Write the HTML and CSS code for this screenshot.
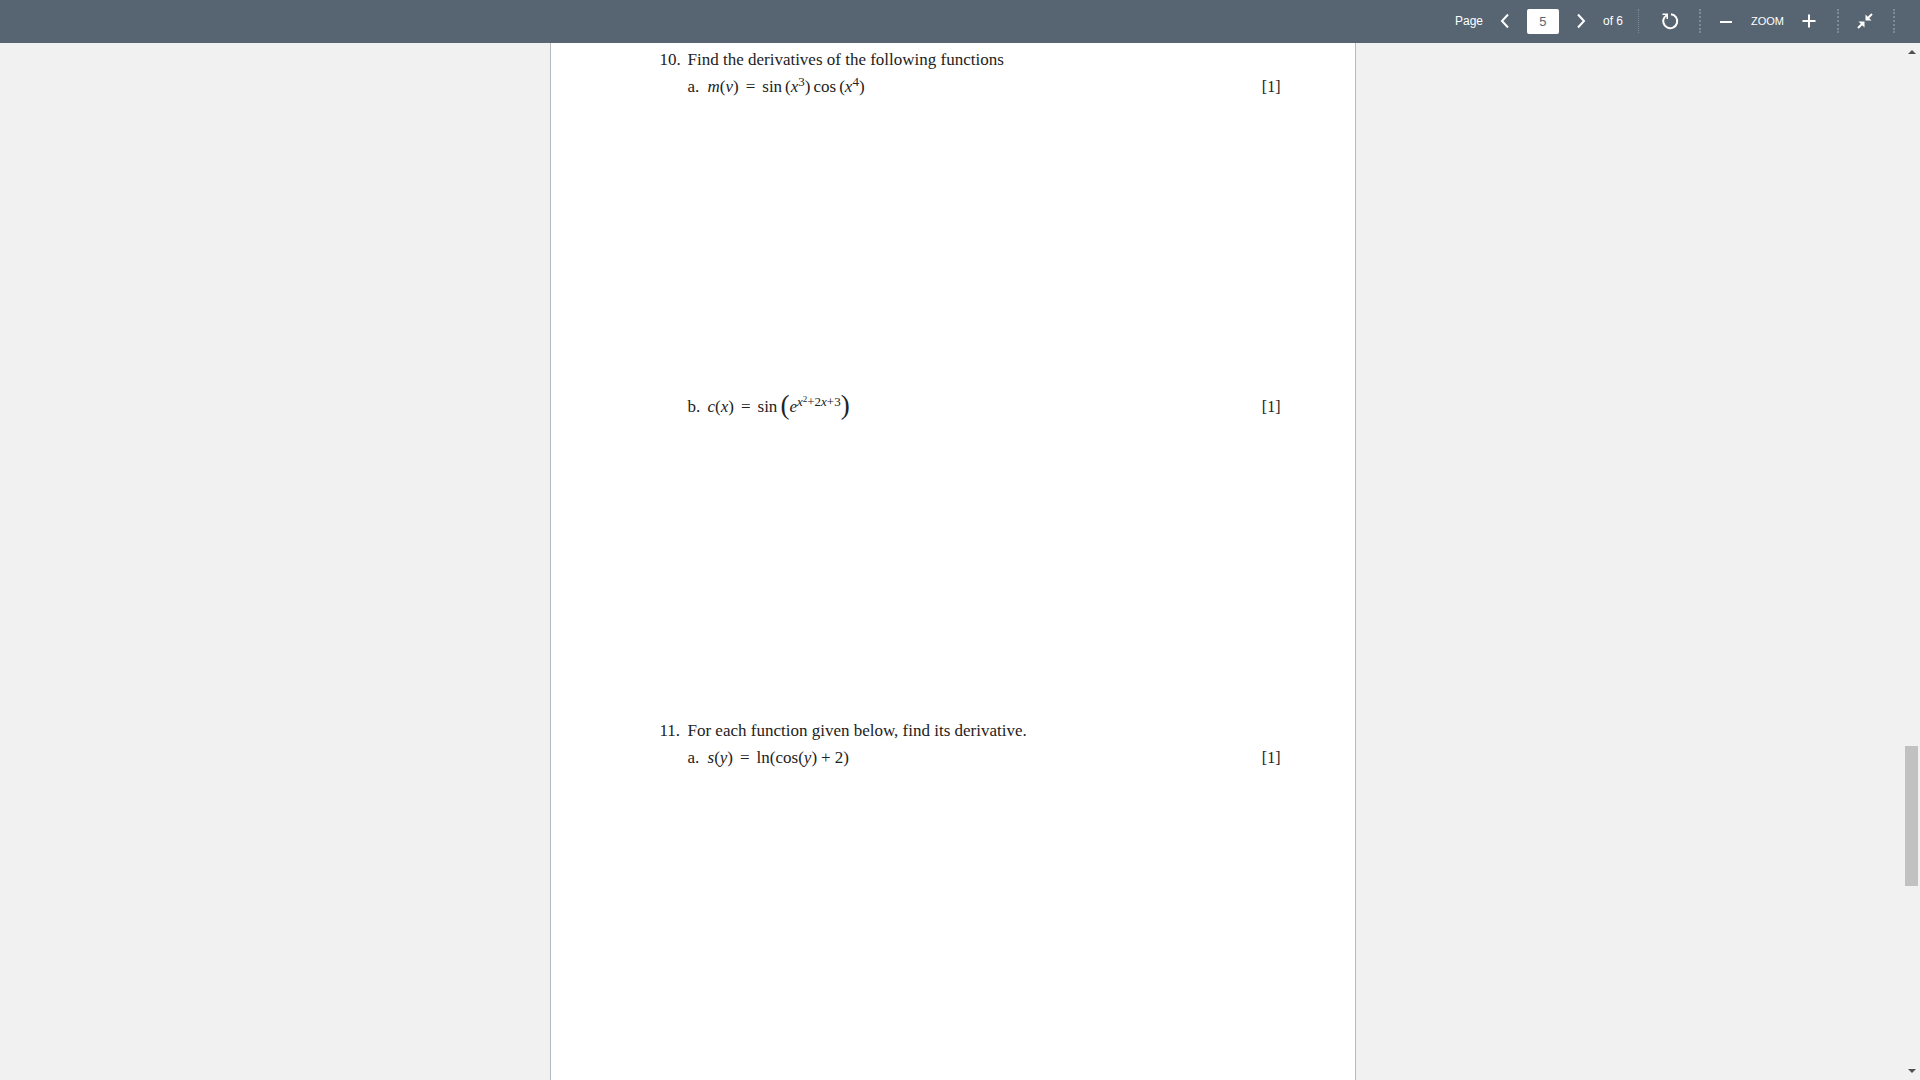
FILE: index.html
```html
<!DOCTYPE html>
<html lang="en">
<head>
<meta charset="utf-8">
<title>Document viewer</title>
<link rel="stylesheet" href="styles.css">
</head>
<body>
<header class="toolbar">
  <div class="group pager">
    <label for="page">Page</label>
    <button type="button" aria-label="Previous page"><svg width="10" height="16" viewBox="0 0 10 16"><path d="M8 1.500 2 8l6 6.500" /></svg></button>
    <input id="page" type="text" value="5">
    <button type="button" aria-label="Next page"><svg width="10" height="16" viewBox="0 0 10 16"><path d="M2 1.500 8 8l-6 6.500" /></svg></button>
    <span>of 6</span>
  </div>
  <div class="group rotate">
    <button type="button" aria-label="Rotate"><svg width="18" height="18" viewBox="0 0 18 18"><path d="M10 2.200A7 7 0 1 1 3.600 5" /><path class="fill" d="M1.500 1.500h5.500v5.500H5.500V4.500L3.800 6 2.800 5l1.700-2h-3z" /></svg></button>
  </div>
  <div class="group zoom">
    <button type="button" aria-label="Zoom out"><svg width="14" height="14" viewBox="0 0 14 14"><path d="M1 8h12" /></svg></button>
    <span>ZOOM</span>
    <button type="button" aria-label="Zoom in"><svg width="14" height="14" viewBox="0 0 14 14"><path d="M.5 7h13M7 .5v13" /></svg></button>
  </div>
  <div class="group shrink">
    <button type="button" aria-label="Exit full screen"><svg width="16" height="16" viewBox="0 0 16 16"><path d="M15 1l-4.500 4.500M1 15l4.500-4.500" /><path class="fill" d="M8.500 1.500v6h6l-2-2-2-2zM1.500 8.500h6v6l-2-2-2-2z" /></svg></button>
  </div>
</header>
<div class="viewer">
  <main class="sheet">
    <section class="question">
      <span>10.</span>
      <p>Find the derivatives of the following functions</p>
      <div class="part">
        <span>a.</span>
        <span class="formula"><i>m</i>(<i>v</i>)<span class="rel">=</span>sin<span class="open">(</span><i>x</i><sup>3</sup>)<span class="op">cos</span><span class="open">(</span><i>x</i><sup>4</sup>)</span>
        <span class="marks">[1]</span>
      </div>
      <div class="part">
        <span>b.</span>
        <span class="formula"><i>c</i>(<i>x</i>)<span class="rel">=</span>sin<span class="open big">(</span><i>e</i><sup><i>x</i><sup>2</sup>+2<i>x</i>+3</sup><span class="big">)</span></span>
        <span class="marks">[1]</span>
      </div>
    </section>
    <section class="question">
      <span>11.</span>
      <p>For each function given below, find its derivative.</p>
      <div class="part">
        <span>a.</span>
        <span class="formula"><i>s</i>(<i>y</i>)<span class="rel">=</span>ln(cos(<i>y</i>)<span class="bin">+</span>2)</span>
        <span class="marks">[1]</span>
      </div>
    </section>
  </main>
  <div class="scrollbar">
    <svg width="8" height="4" viewBox="0 0 8 4"><path d="M0 4 4 0l4 4z" /></svg>
    <div class="track"><div class="thumb"></div></div>
    <svg width="8" height="4" viewBox="0 0 8 4"><path d="M0 0h8L4 4z" /></svg>
  </div>
</div>
</body>
</html>
```
FILE: styles.css
```css
* {
  box-sizing: border-box;
}

body {
  margin: 0;
  height: 100vh;
  display: flex;
  flex-direction: column;
  overflow: hidden;
  background: #f1f1f1;
}

/* Toolbar */
.toolbar {
  flex: none;
  height: 43px;
  padding: 0 25px 1px 0;
  display: flex;
  justify-content: flex-end;
  align-items: center;
  background: #566571;
  color: #fff;
  font: 12px/16px "Liberation Sans", Arial, sans-serif;
}

.group {
  height: 24px;
  display: flex;
  align-items: center;
  border-right: 2px dotted #7e8a94;
}

.pager {
  gap: 9px;
  padding-right: 15px;
  border-right-width: 1px;
}

.rotate {
  padding: 0 16px 0 18px;
}

.zoom {
  gap: 12px;
  padding: 0 15px 0 12px;
  font-size: 11px;
}

.shrink {
  padding: 0 15px 0 13px;
}

.toolbar button {
  width: 26px;
  height: 26px;
  padding: 0;
  border: 0;
  background: none;
  display: grid;
  place-items: center;
}

.toolbar input {
  width: 32px;
  height: 25px;
  padding: 0;
  border: 0;
  border-radius: 2px;
  background: #fff;
  color: #566571;
  text-align: center;
  font: 13px/16px "Liberation Sans", Arial, sans-serif;
}

.toolbar path {
  fill: none;
  stroke: #fff;
  stroke-width: 2;
}

.toolbar .fill {
  fill: #fff;
  stroke: none;
}

/* Document */
.viewer {
  flex: 1;
  min-height: 0;
  display: flex;
}

.sheet {
  width: 100%;
  max-width: 806px;
  margin: 0 auto;
  padding: 7px 74px 0 109px;
  border: solid #b4bac0;
  border-width: 0 1px;
  background: #fff;
  color: #222;
  font: 17px/20px "Liberation Serif", "Times New Roman", serif;
}

.question {
  display: grid;
  grid-template-columns: 28px 1fr;
}

.question p {
  margin: 0 0 7px;
}

.part {
  grid-column: 2;
  min-height: 320px;
  display: grid;
  grid-template-columns: 20px 1fr auto;
  align-items: start;
}

.part + .part {
  min-height: 324px;
}

.marks {
  font-size: 16px;
}

.formula sup {
  font-size: 13px;
  line-height: 0;
  vertical-align: 6px;
}

.formula sup sup {
  font-size: 9px;
  vertical-align: 4px;
}

.rel {
  margin: 0 7px;
}

.bin {
  margin: 0 4px;
}

.op,
.open {
  margin-left: 3px;
}

.formula .big {
  font-size: 27px;
  line-height: 0;
  vertical-align: -2px;
}

/* Scrollbar */
.scrollbar {
  flex: none;
  width: 15px;
  padding: 7px 2px 7px 0;
  display: flex;
  flex-direction: column;
  align-items: center;
  gap: 6px;
  fill: #505050;
}

.track {
  flex: 1;
  width: 13px;
}

.thumb {
  height: 14%;
  margin-top: 686px;
  background: #c1c1c1;
}
```
